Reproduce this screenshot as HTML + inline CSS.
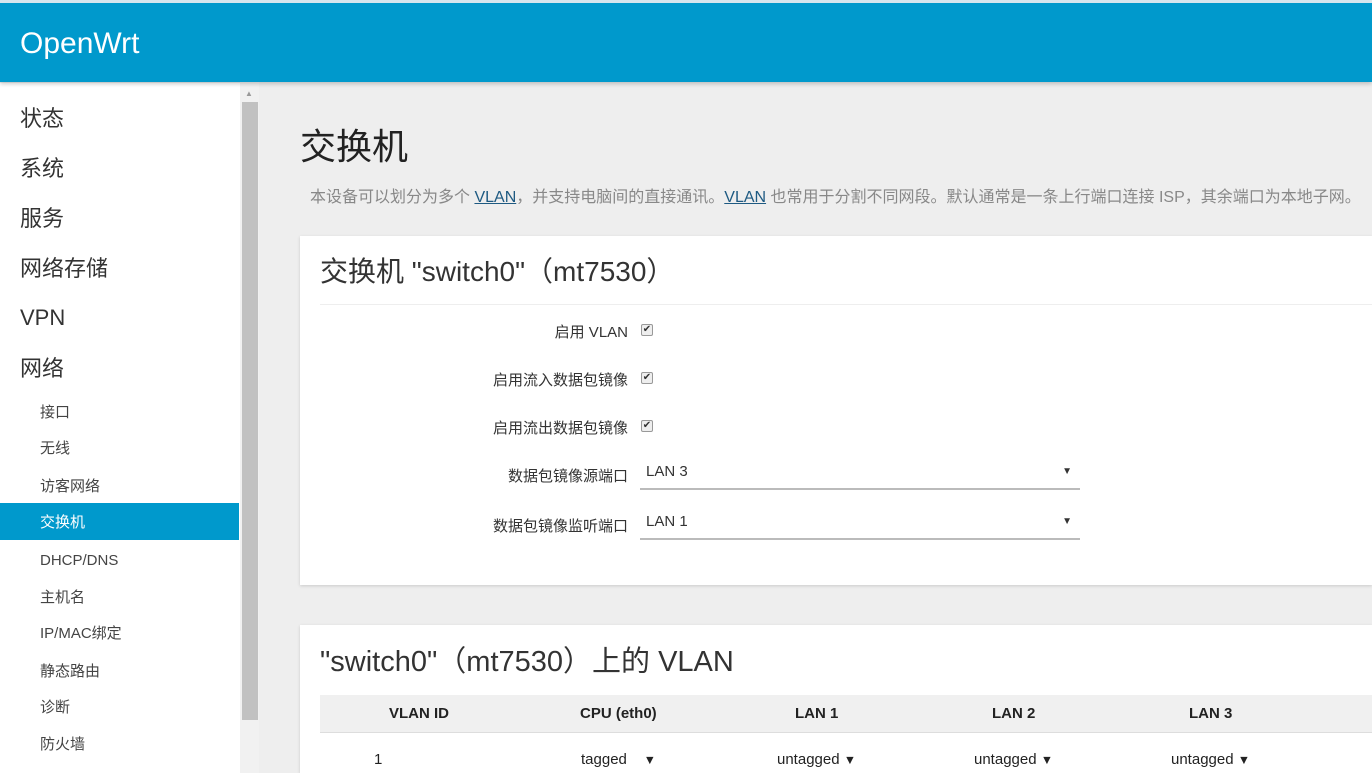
<!DOCTYPE html>
<html><head><meta charset="utf-8"><style>
*{margin:0;padding:0;box-sizing:border-box;line-height:1}
html,body{width:1372px;height:773px;overflow:hidden}
body{background:#eee;font-family:"Liberation Sans","Noto Sans CJK SC",sans-serif;position:relative}
.hdr{position:absolute;left:0;top:0;width:1372px;height:82px;background:#0099cc;border-top:3px solid #d6e6ee;box-shadow:0 2px 4px rgba(0,0,0,.2);z-index:2}
.hdr span{position:absolute;left:20px;top:26px;color:#fff;font-size:30px}
.side{position:absolute;left:0;top:83px;width:240px;height:691px;background:#fff}
.side .m{position:absolute;left:20px;font-size:22px;color:#333}
.side .s{position:absolute;left:40px;font-size:15px;color:#444}
.act{position:absolute;left:0;top:503px;width:239px;height:37px;background:#0099cc}
.sb{position:absolute;left:240px;top:82px;width:19px;height:691px;background:#f1f1f1}
.sb div{position:absolute;left:2px;top:20px;width:16px;height:618px;background:#c1c1c1}
h1{position:absolute;left:300px;top:129px;font-size:36px;font-weight:normal;color:#222}
.desc{position:absolute;left:310px;top:190px;font-size:16px;color:#888;white-space:nowrap}
.desc u{color:#1e5a82}
.card{position:absolute;left:300px;background:#fff;width:1072px;box-shadow:0 1px 3px rgba(0,0,0,.15);overflow:hidden}
.card h2{position:absolute;left:20px;top:22px;font-weight:normal;color:#333;white-space:nowrap}
.lbl{position:absolute;right:744px;font-size:15px;color:#333;white-space:nowrap}
.cb{position:absolute;left:341px;width:12px;height:12px;border:1px solid #999;border-radius:2px;background:#eee;font-size:10px;line-height:10px;text-align:center;color:#333}
.sel{position:absolute;left:340px;width:440px;height:32px;border-bottom:2px solid #bbb;font-size:15px;color:#333;padding:6px 6px}
.sel i{position:absolute;right:8px;top:9px;font-style:normal;font-size:10px}
.th{position:absolute;left:20px;top:70px;width:1060px;height:38px;background:#f0f0f0;border-bottom:1px solid #ddd}
.t{position:absolute;font-size:15px;color:#222;white-space:nowrap}
</style></head><body>
<div class="hdr"><span>OpenWrt</span></div>
<div class="side">
<div class="m" style="top:25px">状态</div>
<div class="m" style="top:75px">系统</div>
<div class="m" style="top:125px">服务</div>
<div class="m" style="top:175px">网络存储</div>
<div class="m" style="top:224px">VPN</div>
<div class="m" style="top:275px">网络</div>
<div class="s" style="top:322px">接口</div>
<div class="s" style="top:358px">无线</div>
<div class="s" style="top:396px">访客网络</div>
</div>
<div class="act"></div>
<div class="side" style="background:none">
<div class="s" style="top:432px;color:#fff">交换机</div>
<div class="s" style="top:470px">DHCP/DNS</div>
<div class="s" style="top:507px">主机名</div>
<div class="s" style="top:543px">IP/MAC绑定</div>
<div class="s" style="top:581px">静态路由</div>
<div class="s" style="top:617px">诊断</div>
<div class="s" style="top:654px">防火墙</div>
</div>
<div class="sb"><div></div><span style="position:absolute;left:5px;top:8px;font-size:8px;color:#999">▲</span></div>
<h1>交换机</h1>
<div class="desc">本设备可以划分为多个 <u>VLAN</u>，并支持电脑间的直接通讯。<u>VLAN</u> 也常用于分割不同网段。默认通常是一条上行端口连接 ISP，其余端口为本地子网。</div>
<div class="card" style="top:236px;height:349px">
<h2 style="font-size:28px">交换机 "switch0"（mt7530）</h2>
<div style="position:absolute;left:20px;right:0;top:68px;border-top:1px solid #eee"></div>
<div class="lbl" style="top:89px">启用 VLAN</div><div class="cb" style="top:88px">✔</div>
<div class="lbl" style="top:137px">启用流入数据包镜像</div><div class="cb" style="top:136px">✔</div>
<div class="lbl" style="top:185px">启用流出数据包镜像</div><div class="cb" style="top:184px">✔</div>
<div class="lbl" style="top:233px">数据包镜像源端口</div><div class="sel" style="top:222px">LAN 3<i>▼</i></div>
<div class="lbl" style="top:283px">数据包镜像监听端口</div><div class="sel" style="top:272px">LAN 1<i>▼</i></div>
</div>
<div class="card" style="top:625px;height:148px">
<h2 style="font-size:29px;top:23px">"switch0"（mt7530）上的 VLAN</h2>
<div class="th"></div>
<div class="t" style="left:89px;top:81px;font-weight:bold">VLAN ID</div>
<div class="t" style="left:280px;top:81px;font-weight:bold">CPU (eth0)</div>
<div class="t" style="left:495px;top:81px;font-weight:bold">LAN 1</div>
<div class="t" style="left:692px;top:81px;font-weight:bold">LAN 2</div>
<div class="t" style="left:889px;top:81px;font-weight:bold">LAN 3</div>
<div class="t" style="left:74px;top:127px">1</div>
<div class="t" style="left:281px;top:127px">tagged &nbsp;&nbsp;&nbsp;<small>▼</small></div>
<div class="t" style="left:477px;top:127px">untagged <small>▼</small></div>
<div class="t" style="left:674px;top:127px">untagged <small>▼</small></div>
<div class="t" style="left:871px;top:127px">untagged <small>▼</small></div>
</div>
</body></html>
